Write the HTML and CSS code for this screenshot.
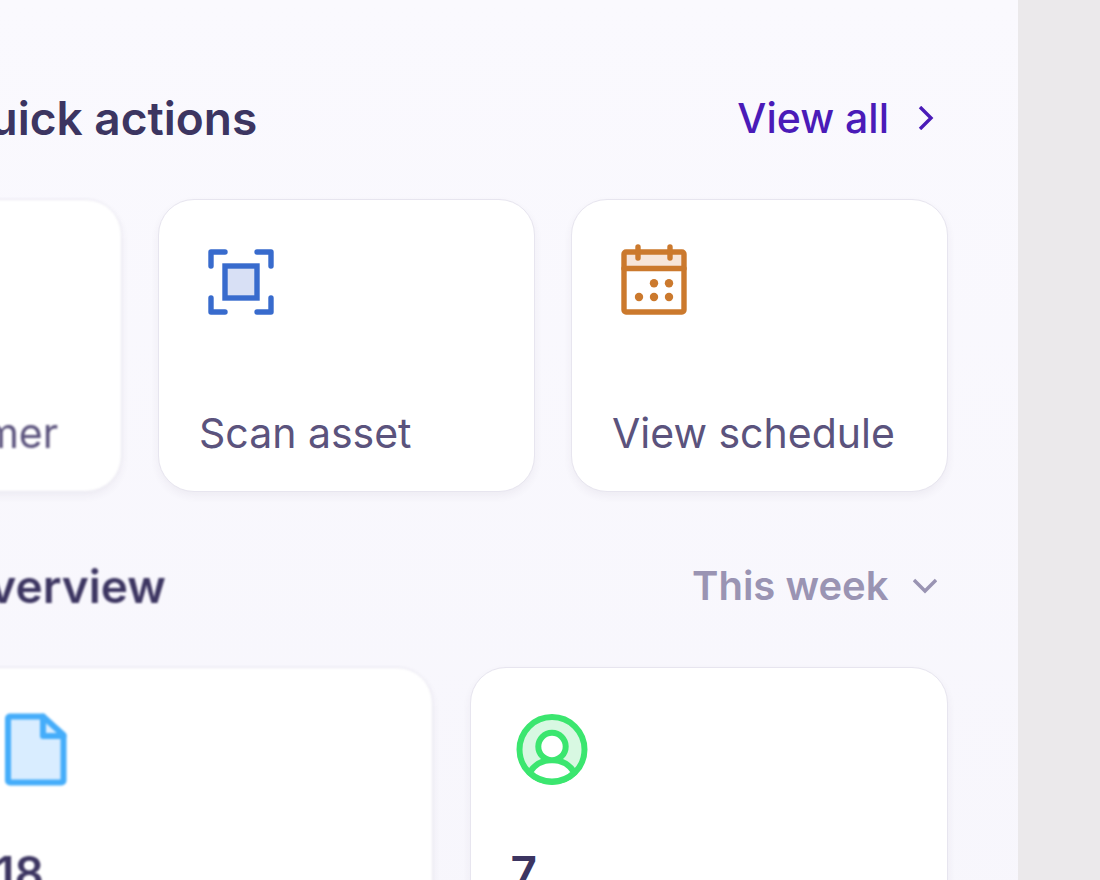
FILE: index.html
```html
<!DOCTYPE html>
<html lang="en">
<head>
<meta charset="utf-8">
<meta name="viewport" content="width=device-width, initial-scale=1">
<title>Dashboard</title>
<link rel="stylesheet" href="styles.css">
</head>
<body>
<main class="panel">
  <section class="section">
    <header class="section-head">
      <h2 class="section-title">Quick actions</h2>
      <a class="view-all" href="#">View all
        <svg class="chevron" viewBox="0 0 24 24" aria-hidden="true"><path d="M7 1 18 12 7 23"/></svg>
      </a>
    </header>
    <div class="actions">
      <button class="card action distant" type="button">
        <svg class="icon" viewBox="0 0 84 84" aria-hidden="true"></svg>
        <span class="label">Add customer</span>
      </button>
      <button class="card action" type="button">
        <svg class="icon scan" viewBox="0 0 84 84" aria-hidden="true">
          <path d="M12 26V12h14M58 12h14v14M72 58v14H58M26 72H12V58"/>
          <rect class="tint" x="26" y="26" width="32" height="32"/>
        </svg>
        <span class="label">Scan asset</span>
      </button>
      <button class="card action" type="button">
        <svg class="icon calendar" viewBox="0 0 84 84" aria-hidden="true">
          <path class="tint flat" d="M12 12h60v17H12z"/>
          <rect x="12" y="12" width="60" height="60" rx="2"/>
          <path d="M12 28.5h60M26 7v11M58 7v11"/>
          <g class="dots"><circle cx="42" cy="43.3" r="4.2"/><circle cx="57" cy="43.3" r="4.2"/><circle cx="27" cy="57" r="4.2"/><circle cx="42" cy="57" r="4.2"/><circle cx="57" cy="57" r="4.2"/></g>
        </svg>
        <span class="label">View schedule</span>
      </button>
    </div>
  </section>
  <section class="section">
    <header class="section-head">
      <h2 class="section-title distant">Overview</h2>
      <label class="period">
        <select class="period-select" aria-label="Period"><option>This week</option></select>
        <svg class="chevron" viewBox="0 0 24 24" aria-hidden="true"><path d="M1 6 12 17 23 6"/></svg>
      </label>
    </header>
    <div class="stats">
      <article class="card stat distant">
        <svg class="icon file" viewBox="0 0 84 84" aria-hidden="true">
          <path class="tint" d="M15 8.5h33L68.500 27v45.500a2 2 0 0 1-2 2H15a2 2 0 0 1-2-2v-62a2 2 0 0 1 2-2z"/>
          <path d="M48 8.500V28h20.500"/>
        </svg>
        <strong class="value">18</strong>
      </article>
      <article class="card stat">
        <svg class="icon user" viewBox="0 0 84 84" aria-hidden="true">
          <circle class="tint" cx="41" cy="41.500" r="32.500"/>
          <path class="blank" d="M18.500 64.500C24 56 32 52 41 52s17 4 22.500 12.500A32.500 32.500 0 0 1 18.500 64.500z"/>
          <circle class="blank" cx="41" cy="38.500" r="13.700"/>
        </svg>
        <strong class="value">7</strong>
      </article>
    </div>
  </section>
</main>
</body>
</html>
```
FILE: styles.css
```css
* { box-sizing: border-box; }

body {
  margin: 0;
  height: 100vh;
  overflow: hidden;
  background: #ebe9eb;
  font-family: Inter, "Liberation Sans", sans-serif;
  color: #3c3561;
}

.panel {
  min-height: 100vh;
  margin: 0 82px 0 -46px;
  padding: 90px 70px 40px 0;
  background: linear-gradient(#faf9fe, #f7f6fc);
  display: flex;
  flex-direction: column;
  gap: 66px;
}

.section {
  display: flex;
  flex-direction: column;
  gap: 53px;
}

.section-head {
  display: flex;
  justify-content: space-between;
  align-items: center;
  height: 56px;
  padding-right: 11px;
}

.section-title {
  margin: 0;
  font-size: 46px;
  line-height: 56px;
  font-weight: 600;
}

.view-all,
.period {
  display: flex;
  align-items: center;
  gap: 24px;
  font-size: 41px;
  line-height: 48px;
  font-weight: 500;
}

.view-all {
  color: #4a1bb8;
  text-decoration: none;
}

.period { color: #9a94b3; }

.period-select {
  appearance: none;
  border: 0;
  padding: 0;
  background: none;
  color: inherit;
  font: inherit;
  font-size: 40px;
  font-weight: 600;
}

.chevron {
  width: 24px;
  height: 24px;
  fill: none;
  stroke: currentColor;
  stroke-width: 3.4;
}

.actions {
  display: flex;
  justify-content: flex-end;
  gap: 36px;
}

.stats {
  display: grid;
  grid-template-columns: 1fr 1fr;
  gap: 37px;
}

.card {
  display: flex;
  flex-direction: column;
  align-items: flex-start;
  background: #fff;
  border: 1px solid #e7e5ef;
  border-radius: 36px;
  box-shadow: 0 4px 8px rgba(60, 45, 90, 0.06);
  padding: 40px 40px 34px;
}

.action {
  flex: 0 0 377px;
  height: 293px;
  justify-content: space-between;
  color: #5b537d;
  font: 400 41px/48px Inter, "Liberation Sans", sans-serif;
  text-align: left;
}

.label { white-space: nowrap; }

.stat { gap: 53px; min-height: 292px; }

.value {
  font-size: 46px;
  line-height: 56px;
  font-weight: 600;
}

.distant { filter: blur(1px); }

.icon {
  width: 84px;
  height: 84px;
  fill: none;
  stroke-width: 5.4;
  stroke-linecap: round;
  stroke-linejoin: round;
}

.scan { stroke: #386bcd; }
.scan .tint { fill: #d8e0f5; stroke-linejoin: miter; }

.calendar { stroke: #cb792d; }
.calendar .tint { fill: #f7e5d9; }
.calendar .flat { stroke: none; }
.dots { fill: #cb792d; stroke: none; }

.file { stroke: #45adfa; stroke-width: 6; }
.file .tint { fill: #d9edff; }

.user { stroke: #3be66f; stroke-width: 6; }
.user .tint { fill: #d8f8e2; }
.user .blank { fill: #fff; }
```
